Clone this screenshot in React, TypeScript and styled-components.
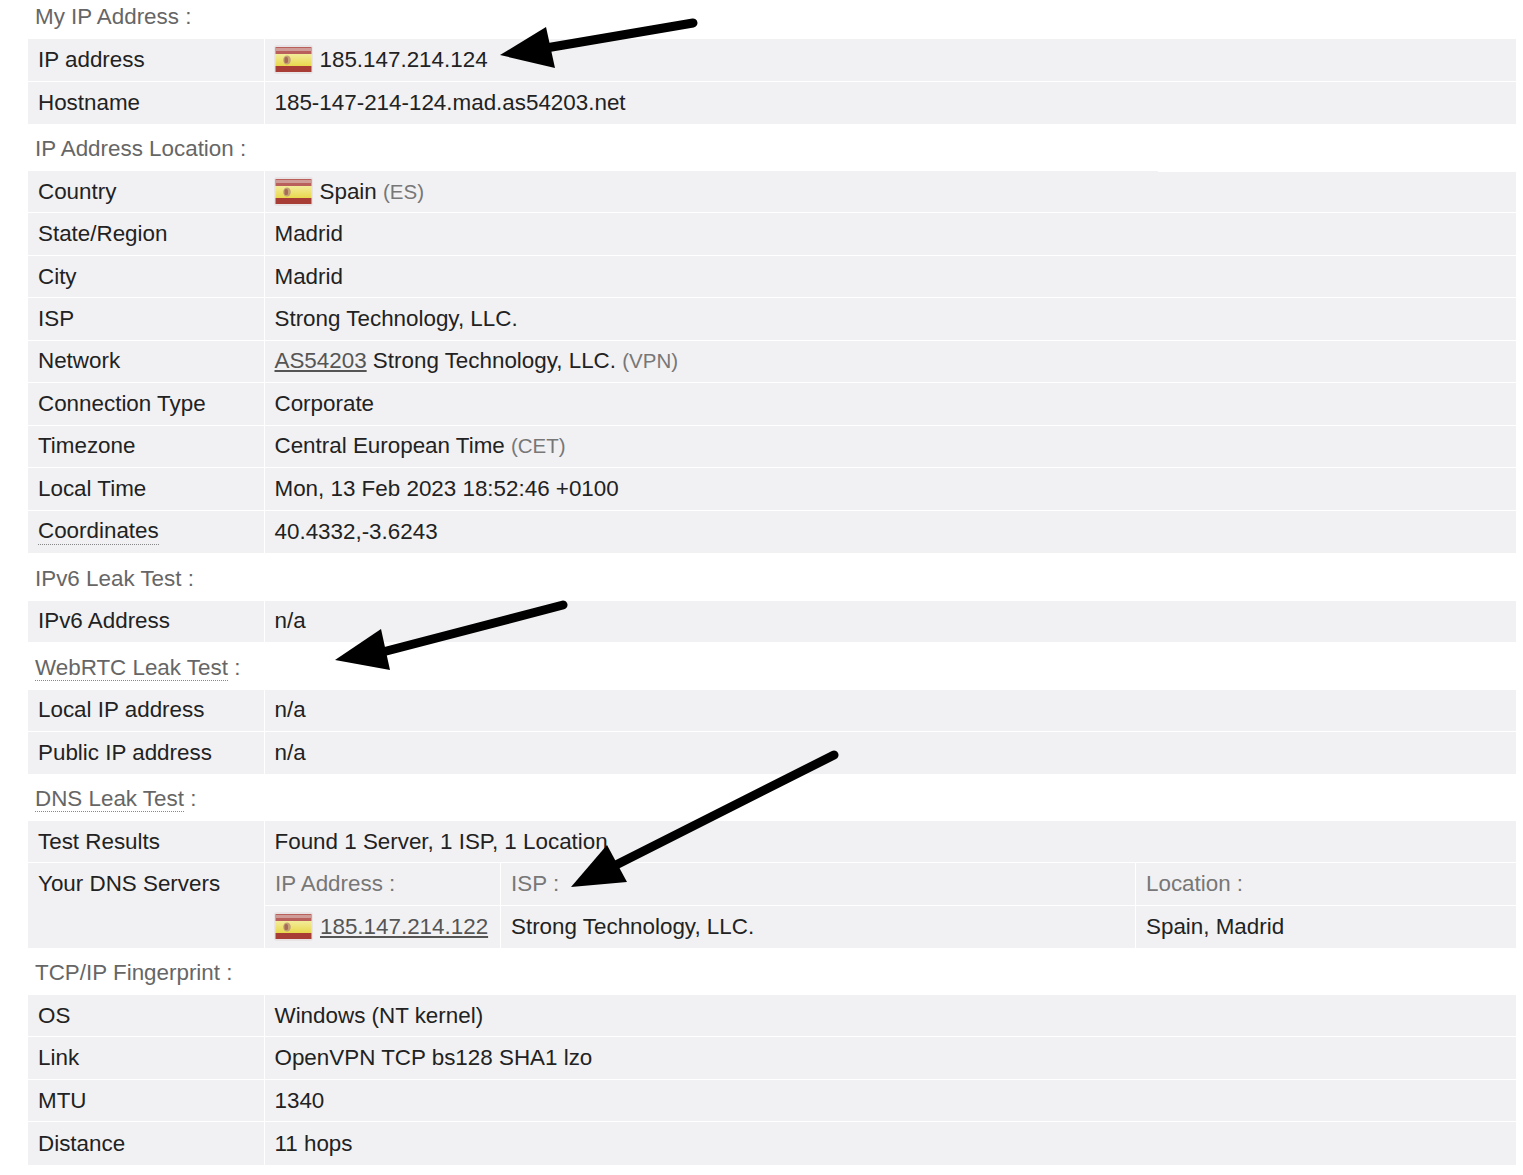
import { createGlobalStyle, styled } from 'styled-components';

const GlobalStyle = createGlobalStyle`
  html, body {
    margin: 0;
    padding: 0;
    background: #fff;
  }
  body {
    font-family: "Liberation Sans", Arial, sans-serif;
    color: #222;
  }
`;

// flag icon, the same one is used in three rows
const Flag = () => (
  <FlagSvg viewBox="0 0 39 29" width="39" height="29">
    <defs>
      <linearGradient id="flagYellow" x1="0" y1="0" x2="0" y2="1">
        <stop offset="0" stopColor="#f3ec9a" />
        <stop offset="1" stopColor="#e8d84e" />
      </linearGradient>
      <filter id="flagSoft">
        <feGaussianBlur stdDeviation="0.4" />
      </filter>
    </defs>
    <rect x="0" y="0" width="39" height="29" rx="3" fill="#e8e3e5" />
    <g filter="url(#flagSoft)">
      <rect x="1.5" y="2" width="36" height="7" fill="#b9615c" />
      <rect x="1.5" y="3" width="36" height="3" fill="#cf9c98" />
      <rect x="1.5" y="9" width="36" height="12" fill="url(#flagYellow)" />
      <rect x="1.5" y="21" width="36" height="6" fill="#a83c36" />
      <ellipse cx="13" cy="15" rx="3.8" ry="4.6" fill="#c4a276" />
      <rect x="10.5" y="12" width="3.5" height="6" rx="1.5" fill="#a86a58" />
    </g>
  </FlagSvg>
);

interface RowData {
  label: string;
  dotted?: boolean;
  value: React.ReactNode;
}

interface SectionProps {
  title: string;
  dotted?: boolean;
  headingHeight: number;
  rowHeight: number;
  rows: RowData[];
  patched?: boolean;
}

const SectionBlock = ({ title, dotted, headingHeight, rowHeight, rows, patched }: SectionProps) => (
  <section>
    <Heading $height={headingHeight}>
      <HeadingText>
        {dotted ? <Dotted>{title}</Dotted> : title} :
      </HeadingText>
    </Heading>
    {rows.map((row, i) => (
      <Row key={row.label} $height={rowHeight} $patched={patched && i === 0}>
        <Label>{row.dotted ? <Dotted>{row.label}</Dotted> : row.label}</Label>
        <Value>{row.value}</Value>
      </Row>
    ))}
  </section>
);

const App = () => (
  <Page>
    <GlobalStyle />
    <SectionBlock
      headingHeight={39}
      rowHeight={42.5}
      title="My IP Address"
      rows={[
        {
          label: 'IP address',
          value: (
            <>
              <Flag />
              185.147.214.124
            </>
          ),
        },
        { label: 'Hostname', value: '185-147-214-124.mad.as54203.net' },
      ]}
    />
    <SectionBlock
      patched
      headingHeight={47}
      rowHeight={42.44}
      title="IP Address Location"
      rows={[
        {
          label: 'Country',
          value: (
            <>
              <Flag />
              Spain&nbsp;<Muted>(ES)</Muted>
            </>
          ),
        },
        { label: 'State/Region', value: 'Madrid' },
        { label: 'City', value: 'Madrid' },
        { label: 'ISP', value: 'Strong Technology, LLC.' },
        {
          label: 'Network',
          value: (
            <>
              <GreyLink>AS54203</GreyLink>&nbsp;Strong Technology, LLC.&nbsp;<Muted>(VPN)</Muted>
            </>
          ),
        },
        { label: 'Connection Type', value: 'Corporate' },
        {
          label: 'Timezone',
          value: (
            <>
              Central European Time&nbsp;<Muted>(CET)</Muted>
            </>
          ),
        },
        { label: 'Local Time', value: 'Mon, 13 Feb 2023 18:52:46 +0100' },
        { label: 'Coordinates', dotted: true, value: '40.4332,-3.6243' },
      ]}
    />
    <SectionBlock
      headingHeight={48}
      rowHeight={41}
      title="IPv6 Leak Test"
      rows={[{ label: 'IPv6 Address', value: 'n/a' }]}
    />
    <SectionBlock
      dotted
      headingHeight={48}
      rowHeight={42}
      title="WebRTC Leak Test"
      rows={[
        { label: 'Local IP address', value: 'n/a' },
        { label: 'Public IP address', value: 'n/a' },
      ]}
    />
    <section>
      <Heading $height={47}>
        <HeadingText>
          <Dotted>DNS Leak Test</Dotted> :
        </HeadingText>
      </Heading>
      <Row $height={42.33}>
        <Label>Test Results</Label>
        <Value>Found 1 Server, 1 ISP, 1 Location</Value>
      </Row>
      <DnsRow>
        <DnsLabel>Your DNS Servers</DnsLabel>
        <DnsHead>IP Address :</DnsHead>
        <DnsHead>ISP :</DnsHead>
        <DnsHead>Location :</DnsHead>
        <DnsCell>
          <Flag />
          <GreyLink>185.147.214.122</GreyLink>
        </DnsCell>
        <DnsCell>Strong Technology, LLC.</DnsCell>
        <DnsCell>Spain, Madrid</DnsCell>
      </DnsRow>
    </section>
    <SectionBlock
      headingHeight={47}
      rowHeight={42.5}
      title="TCP/IP Fingerprint"
      rows={[
        { label: 'OS', value: 'Windows (NT kernel)' },
        { label: 'Link', value: 'OpenVPN TCP bs128 SHA1 lzo' },
        { label: 'MTU', value: '1340' },
        { label: 'Distance', value: '11 hops' },
      ]}
    />

    {/* hand drawn arrows lying over the table */}
    <Arrows viewBox="0 0 1523 1175" width="1523" height="1175">
      <path d="M693 23 L540 49" />
      <polygon points="500,55 546,27 555,68" />
      <path d="M563 605 L375 654" />
      <polygon points="335,660 381,629 390,670" />
      <path d="M834 755 L610 868" />
      <polygon points="571,887 607,845 627,882" />
    </Arrows>
  </Page>
);

const Page = styled.main`
  position: relative;
  width: 1523px;
  height: 1175px;
  padding: 0 7px 0 28px;
  box-sizing: border-box;
  overflow: hidden;
  font-size: 22.4px;
`;

const Heading = styled.div<{ $height: number }>`
  display: flex;
  align-items: flex-end;
  height: ${({ $height }) => $height}px;
  padding: 0 0 9px 7px;
  box-sizing: border-box;
`;

const HeadingText = styled.h3`
  margin: 0;
  font-size: inherit;
  font-weight: 400;
  line-height: 26px;
  color: #666;
`;

const Dotted = styled.span`
  border-bottom: 1px dotted #888;
`;

const Row = styled.div<{ $height: number; $patched?: boolean }>`
  position: relative;
  display: grid;
  grid-template-columns: 236px 1fr;
  height: ${({ $height }) => $height}px;
  border-bottom: 1px solid #fff;
  box-sizing: border-box;
  background: #f1f1f3;

  section > &:last-child {
    border-bottom: 0;
  }

  /* the picture has a 1px white nick along the top of this row */
  ${({ $patched }) =>
    $patched &&
    `
    &::after {
      content: '';
      position: absolute;
      top: 0;
      right: 0;
      width: 358px;
      height: 1px;
      background: #fff;
    }
  `}
`;

const Label = styled.div`
  display: flex;
  align-items: center;
  padding-left: 10px;
`;

const Value = styled.div`
  display: flex;
  align-items: center;
  padding-left: 9.5px;
  border-left: 1px solid #fff;
`;

const FlagSvg = styled.svg`
  flex: none;
  margin: 0 7px 0 -1px;
`;

const Muted = styled.span`
  font-size: 20.5px;
  color: #777;
`;

const GreyLink = styled.span`
  color: #555;
  text-decoration: underline;
`;

const DnsRow = styled.div`
  display: grid;
  grid-template-columns: 236px 236px 635px 1fr;
  grid-template-rows: 42.33px 42.33px;
  background: #f1f1f3;
`;

const DnsLabel = styled.div`
  grid-row: 1 / span 2;
  padding: 0 0 0 10px;
  line-height: 42px;
`;

const DnsHead = styled.div`
  display: flex;
  align-items: center;
  padding-left: 10px;
  color: #777;
  border-left: 1px solid #fff;
  border-bottom: 1px solid #fff;
`;

const DnsCell = styled.div`
  display: flex;
  align-items: center;
  padding-left: 10px;
  border-left: 1px solid #fff;
`;

const Arrows = styled.svg`
  position: absolute;
  top: 0;
  left: 0;
  pointer-events: none;

  path {
    fill: none;
    stroke: #000;
    stroke-width: 9;
    stroke-linecap: round;
  }

  polygon {
    fill: #000;
  }
`;

export default App;
